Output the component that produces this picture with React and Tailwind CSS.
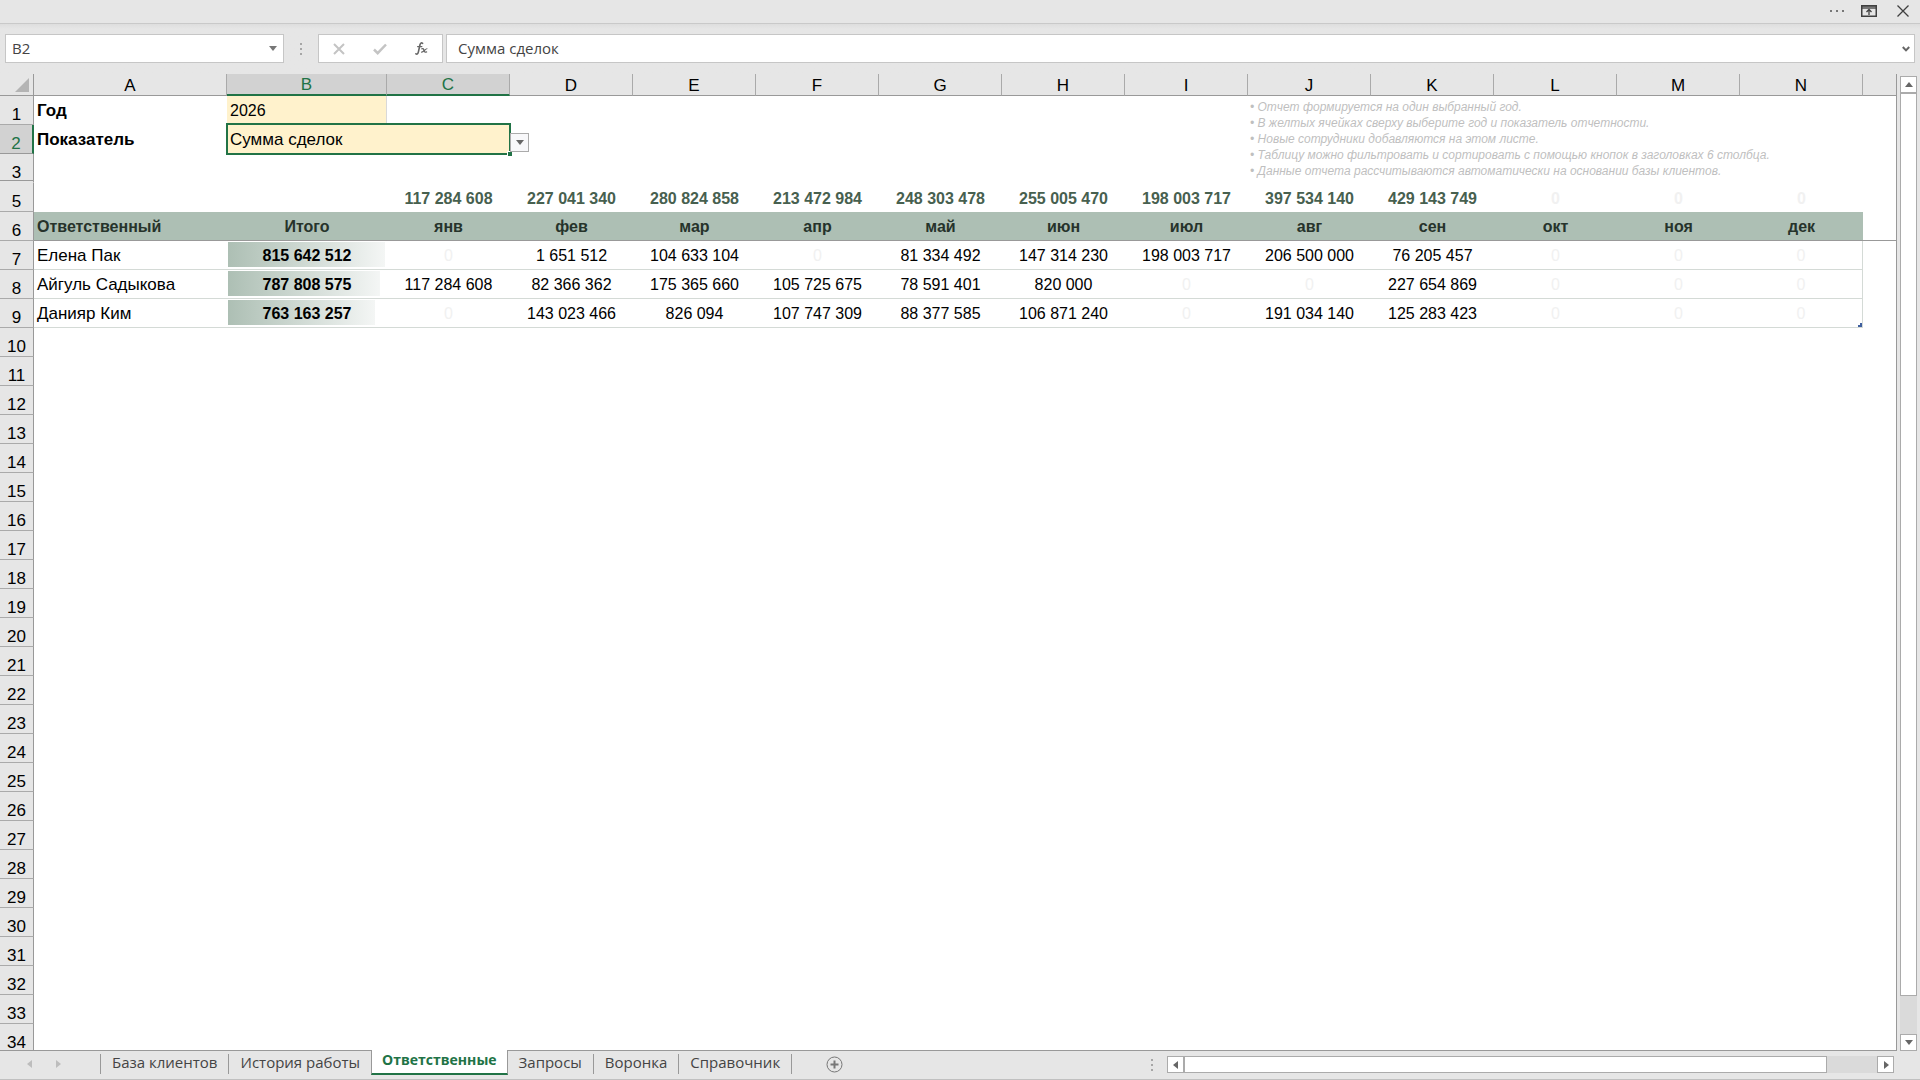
import React from "react";

const LETTERS = ["A", "B", "C", "D", "E", "F", "G", "H", "I", "J", "K", "L", "M", "N"];

const TOTALS = [
  "117 284 608", "227 041 340", "280 824 858", "213 472 984", "248 303 478", "255 005 470",
  "198 003 717", "397 534 140", "429 143 749", "0", "0", "0",
];

const MONTHS = ["янв", "фев", "мар", "апр", "май", "июн", "июл", "авг", "сен", "окт", "ноя", "дек"];

const PEOPLE = [
  {
    name: "Елена Пак", total: "815 642 512", bar: 99,
    values: ["0", "1 651 512", "104 633 104", "0", "81 334 492", "147 314 230", "198 003 717", "206 500 000", "76 205 457", "0", "0", "0"],
  },
  {
    name: "Айгуль Садыкова", total: "787 808 575", bar: 96,
    values: ["117 284 608", "82 366 362", "175 365 660", "105 725 675", "78 591 401", "820 000", "0", "0", "227 654 869", "0", "0", "0"],
  },
  {
    name: "Данияр Ким", total: "763 163 257", bar: 93,
    values: ["0", "143 023 466", "826 094", "107 747 309", "88 377 585", "106 871 240", "0", "191 034 140", "125 283 423", "0", "0", "0"],
  },
];

const NOTES = [
  "• Отчет формируется на один выбранный год.",
  "• В желтых ячейках сверху выберите год и показатель отчетности.",
  "• Новые сотрудники добавляются на этом листе.",
  "• Таблицу можно фильтровать и сортировать с помощью кнопок в заголовках 6 столбца.",
  "• Данные отчета рассчитываются автоматически на основании базы клиентов.",
];

const TABS = ["База клиентов", "История работы", "Ответственные", "Запросы", "Воронка", "Справочник"];

const EMPTY_ROWS = Array.from({ length: 25 }, (_, i) => i + 10);

function Triangle({ dir = "down", className = "" }) {
  const points = {
    down: "0,1 8,1 4,6",
    up: "0,6 8,6 4,1",
    left: "6,0 6,8 1,4",
    right: "2,0 2,8 7,4",
  }[dir];
  return (
    <svg viewBox="0 0 8 8" className={`size-2 fill-current ${className}`} aria-hidden="true">
      <polygon points={points} />
    </svg>
  );
}

function Dots() {
  return (
    <span className="flex flex-col gap-[3px]" aria-hidden="true">
      <i className="size-[2px] bg-[#a6a6a6]" />
      <i className="size-[2px] bg-[#a6a6a6]" />
      <i className="size-[2px] bg-[#a6a6a6]" />
    </span>
  );
}

function TitleBar() {
  return (
    <header className="flex h-6 shrink-0 items-center justify-end gap-4 border-b border-[#c9c9c9] pr-[11px] pb-0.5 text-[#404040]">
      <button aria-label="Ещё" className="flex h-4 w-4 items-center justify-center">
        <svg viewBox="0 0 16 4" className="h-1 w-4 fill-[#777]">
          <rect x="1" y="1" width="2" height="2" />
          <rect x="7" y="1" width="2" height="2" />
          <rect x="13" y="1" width="2" height="2" />
        </svg>
      </button>
      <button aria-label="Параметры отображения ленты">
        <svg viewBox="0 0 16 12" className="h-3 w-4" fill="none" stroke="currentColor">
          <path d="M1 2.5H15" strokeWidth="3" stroke="#777" />
          <rect x="0.75" y="0.75" width="14.5" height="10.5" strokeWidth="1.5" />
          <path d="M8 10V4.5M5.5 7L8 4.5L10.5 7" strokeWidth="1.3" />
        </svg>
      </button>
      <button aria-label="Закрыть" className="ml-1">
        <svg viewBox="0 0 12 12" className="size-3" fill="none" stroke="currentColor" strokeWidth="1.3">
          <path d="M.5.5L11.5 11.5M11.5.5L.5 11.5" />
        </svg>
      </button>
    </header>
  );
}

function FormulaBar() {
  return (
    <div className="flex h-[50px] shrink-0 items-start bg-linear-to-b from-[#dedede] to-[#e6e6e6] to-10% pt-2.5 pr-[5px] pl-[5px] font-['Open_Sans',sans-serif] text-[15px] text-[#444]">
      <div className="flex h-[29px] w-[279px] items-center border border-[#c6c6c6] bg-white pr-1.5 pl-1.5">
        <input aria-label="Имя ячейки" defaultValue="B2" className="min-w-0 flex-1 bg-transparent outline-none" />
        <button aria-label="Список имён" className="text-[#777]"><Triangle /></button>
      </div>
      <div className="flex h-[29px] w-[34px] items-center justify-center"><Dots /></div>
      <div className="flex h-[29px] w-[125px] items-center justify-between border border-[#c6c6c6] bg-white px-3.5">
        <button aria-label="Отмена" className="text-[#c4c4c4]">
          <svg viewBox="0 0 12 12" className="size-3" fill="none" stroke="currentColor" strokeWidth="2"><path d="M1 1L11 11M11 1L1 11" /></svg>
        </button>
        <button aria-label="Ввод" className="text-[#c4c4c4]">
          <svg viewBox="0 0 14 12" className="h-3 w-3.5" fill="none" stroke="currentColor" strokeWidth="2.5"><path d="M1 6.5L4.7 10.2L13 1.5" /></svg>
        </button>
        <button aria-label="Вставить функцию">
          <svg viewBox="0 0 13 13" className="size-[13px]" fill="none" stroke="#666" strokeLinecap="round">
            <path d="M7.6 1.3C6.3 .3 5.3 1.2 4.9 3L3.4 9.8C3 11.7 2 12.6 .9 11.8" strokeWidth="1.6" />
            <path d="M2.6 4.6H6.9" strokeWidth="1.2" />
            <path d="M6.8 6.8C8.2 6.2 8.6 7 9 8.4C9.4 10 10 10.6 11.6 9.9" strokeWidth="1.3" />
            <path d="M12 6.7C10.4 6.5 8.6 10.4 6.5 10.1" strokeWidth="1.1" />
          </svg>
        </button>
      </div>
      <div className="ml-[3px] flex h-[29px] flex-1 items-center border border-[#c6c6c6] bg-white pr-1 pl-[11px]">
        <input aria-label="Строка формул" defaultValue="Сумма сделок" className="min-w-0 flex-1 bg-transparent outline-none" />
        <button aria-label="Развернуть строку формул">
          <svg viewBox="0 0 8 6" className="h-1.5 w-2" fill="none" stroke="#666" strokeWidth="2"><path d="M.8 1L4 4.4L7.2 1" /></svg>
        </button>
      </div>
    </div>
  );
}

function RowHead({ n, active = false, double = false }) {
  return (
    <th
      scope="row"
      className={`relative border-r border-b p-0 pt-[9px] text-center text-[17px] leading-[19px] font-normal ${
        active
          ? "border-r-2 border-[#999] border-r-[#217346] bg-[#d2d2d2] text-[#217346]"
          : double
            ? "border-transparent border-r-[#999] bg-[#e6e6e6] text-black"
            : "border-[#aaa] border-r-[#999] bg-[#e6e6e6] text-black"
      }`}
    >
      {n}
      {double && <span className="absolute inset-x-0 -bottom-[3px] h-[5px] border-y border-[#999] bg-[#e6e6e6]" />}
    </th>
  );
}

function Num({ children, className = "" }) {
  return <td className={`p-0 pt-0.5 text-center ${children === "0" ? "text-[#f1f1f1]" : ""} ${className}`}>{children}</td>;
}

function Sheet() {
  return (
    <div className="min-w-0 flex-1 overflow-hidden border-r border-b border-[#999]">
      <table className="w-full table-fixed border-separate border-spacing-0 bg-white font-['Liberation_Sans',Arial,sans-serif] text-[16px] leading-6 text-black">
        <colgroup>
          <col className="w-[34px]" />
          <col className="w-[193px]" />
          <col className="w-[160px]" />
          {MONTHS.map((m) => <col key={m} className="w-[123px]" />)}
          <col />
        </colgroup>
        <thead>
          <tr className="h-[22px] bg-[#e6e6e6]">
            <th className="border-r border-b border-[#999] p-0">
              <button aria-label="Выделить всё" className="ml-auto block pr-1">
                <svg viewBox="0 0 14 14" className="size-3.5 fill-[#b4b4b4]"><polygon points="14,0 14,14 0,14" /></svg>
              </button>
            </th>
            {LETTERS.map((l) => (
              <th
                key={l}
                scope="col"
                className={`border-r p-0 pt-0.5 text-[17px] font-normal ${
                  l === "B" || l === "C"
                    ? "border-b-2 border-[#aaa] border-b-[#217346] bg-[#d2d2d2] leading-[18px] text-[#217346]"
                    : "border-b border-[#aaa] border-b-[#999] leading-[19px]"
                }`}
              >
                {l}
              </th>
            ))}
            <th className="border-b border-[#999] p-0" />
          </tr>
        </thead>
        <tbody>
          <tr className="h-[29px]">
            <RowHead n={1} />
            <td className="p-0 pl-[3px] text-[17px] font-bold">Год</td>
            <td className="border-r border-[#d9d9d9] bg-[#fff2cc] p-0">
              <input aria-label="Год" defaultValue="2026" className="block w-full bg-transparent pl-[3px] outline-none" />
            </td>
            <td colSpan={7} />
            <td colSpan={6} className="relative p-0">
              <ul className="absolute top-[3px] left-0.5 text-[12px] leading-4 whitespace-nowrap text-[#bfbfbf] italic">
                {NOTES.map((n) => <li key={n}>{n}</li>)}
              </ul>
            </td>
          </tr>
          <tr className="h-[29px]">
            <RowHead n={2} active />
            <td className="p-0 pl-[3px] text-[17px] font-bold">Показатель</td>
            <td colSpan={2} className="relative bg-[#fff2cc] p-0 text-[17px]">
              <input aria-label="Показатель" defaultValue="Сумма сделок" className="block w-full bg-transparent pl-[3px] outline-none" />
              <span className="pointer-events-none absolute -top-0.5 -right-px -bottom-px -left-px border-2 border-[#217346]" />
              <span className="absolute -right-0.5 -bottom-0.5 size-[5px] border-t border-l border-white bg-[#217346]" />
              <button aria-label="Выбрать показатель" className="absolute top-2 left-full flex size-[19px] items-center justify-center border border-[#ababab] bg-[#f8f8fa] text-[#666]">
                <Triangle />
              </button>
            </td>
            <td colSpan={12} />
          </tr>
          <tr className="h-[29px]">
            <RowHead n={3} double />
            <td colSpan={15} />
          </tr>
          <tr className="h-[29px] font-bold text-[#47604f]">
            <RowHead n={5} />
            <td colSpan={2} />
            {TOTALS.map((t, i) => <Num key={i}>{t}</Num>)}
            <td />
          </tr>
          <tr className="h-[29px] font-bold text-[#26332b] [&>td]:border-b [&>td]:border-[#999]">
            <RowHead n={6} />
            <td className="bg-[#adbfb4] p-0 pt-0.5 pl-[3px]">Ответственный</td>
            <Num className="bg-[#adbfb4]">Итого</Num>
            {MONTHS.map((m) => <Num key={m} className="bg-[#adbfb4]">{m}</Num>)}
            <td />
          </tr>
          {PEOPLE.map((p, r) => (
            <tr key={p.name} className="h-[29px] [&>td]:border-b [&>td]:border-[#d4dad6] [&>td:last-child]:border-b-0 [&>td:nth-last-child(2)]:border-r">
              <RowHead n={7 + r} />
              <td className="p-0 pt-0.5 pl-[3px] text-[17px]">{p.name}</td>
              <td className="relative p-0 pt-0.5 text-center font-bold">
                <span className="absolute top-px bottom-0.5 left-px bg-linear-to-r from-[#adbfb4] to-[#f4f6f5]" style={{ width: `${p.bar - 1}%` }} />
                <span className="relative">{p.total}</span>
              </td>
              {p.values.map((v, i) =>
                r === 2 && i === 11 ? (
                  <td key={i} className="relative p-0 pt-0.5 text-center text-[#f1f1f1]">
                    {v}
                    <svg viewBox="0 0 4 4" className="absolute right-0 bottom-0 size-1 fill-[#3f5f9f]"><path d="M2 0H4V4H0V2H2Z" /></svg>
                  </td>
                ) : (
                  <Num key={i}>{v}</Num>
                )
              )}
              <td />
            </tr>
          ))}
          {EMPTY_ROWS.map((n) => (
            <tr key={n} className="h-[29px]">
              <RowHead n={n} />
              <td colSpan={15} />
            </tr>
          ))}
        </tbody>
      </table>
    </div>
  );
}

function VerticalScroll() {
  return (
    <div className="flex w-[23px] shrink-0 flex-col items-start pt-0.5 pl-[3px]">
      <div className="flex w-[17px] flex-1 flex-col bg-[#dadada]">
        <button aria-label="Вверх" className="flex h-[17px] items-center justify-center border border-[#ababab] bg-white text-[#666]"><Triangle dir="up" /></button>
        <div className="flex flex-1 flex-col">
          <div className="grow-[96] border border-[#ababab] bg-white" />
          <div className="grow-4" />
        </div>
        <button aria-label="Вниз" className="flex h-[17px] items-center justify-center border border-[#ababab] bg-white text-[#666]"><Triangle /></button>
      </div>
    </div>
  );
}

function BottomBar() {
  return (
    <footer className="flex h-[29px] shrink-0 items-start justify-between border-b border-[#c0c0c0] pr-[26px] font-['Open_Sans',sans-serif] text-[15px] leading-4 text-[#444]">
      <div className="flex items-start">
        <div className="flex h-[26px] w-[100px] items-center gap-5 pl-[26px] text-[#bdbdbd]">
          <button aria-label="Предыдущий лист"><Triangle dir="left" /></button>
          <button aria-label="Следующий лист"><Triangle dir="right" /></button>
        </div>
        <nav className="flex items-start" aria-label="Листы">
          {TABS.map((t, i) =>
            t === "Ответственные" ? (
              <button key={t} className="-mt-px h-[25px] border-x border-b-2 border-x-[#999] border-b-[#217346] bg-white px-2.5 pb-1 text-[14px] font-bold text-[#217346]">
                {t}
              </button>
            ) : (
              <button key={t} className={`mt-[3px] h-5 px-[11px] pb-1 ${i === 0 ? "border-l border-[#999]" : ""} ${i === 1 ? "" : "border-r border-[#999]"}`}>
                {t}
              </button>
            )
          )}
        </nav>
        <button aria-label="Новый лист" className="mt-[5px] ml-[34px]">
          <svg viewBox="0 0 17 17" className="size-[17px]" fill="none" stroke="#777">
            <circle cx="8.5" cy="8.5" r="7.5" />
            <path d="M8.5 4.5V12.5M4.5 8.5H12.5" strokeWidth="2" />
          </svg>
        </button>
      </div>
      <div className="mt-[5px] flex w-[743px] items-center">
        <Dots />
        <div className="ml-3.5 flex h-[17px] flex-1 bg-[#dadada]">
          <button aria-label="Влево" className="flex w-[17px] items-center justify-center border border-[#ababab] bg-white text-[#666]"><Triangle dir="left" /></button>
          <div className="w-[643px] border border-[#ababab] bg-white" />
          <button aria-label="Вправо" className="ml-auto flex w-[17px] items-center justify-center border border-[#ababab] bg-white text-[#666]"><Triangle dir="right" /></button>
        </div>
      </div>
    </footer>
  );
}

export default function App() {
  return (
    <div className="flex h-screen flex-col overflow-hidden bg-[#e6e6e6]">
      <TitleBar />
      <FormulaBar />
      <main className="flex min-h-0 flex-1">
        <Sheet />
        <VerticalScroll />
      </main>
      <BottomBar />
    </div>
  );
}
